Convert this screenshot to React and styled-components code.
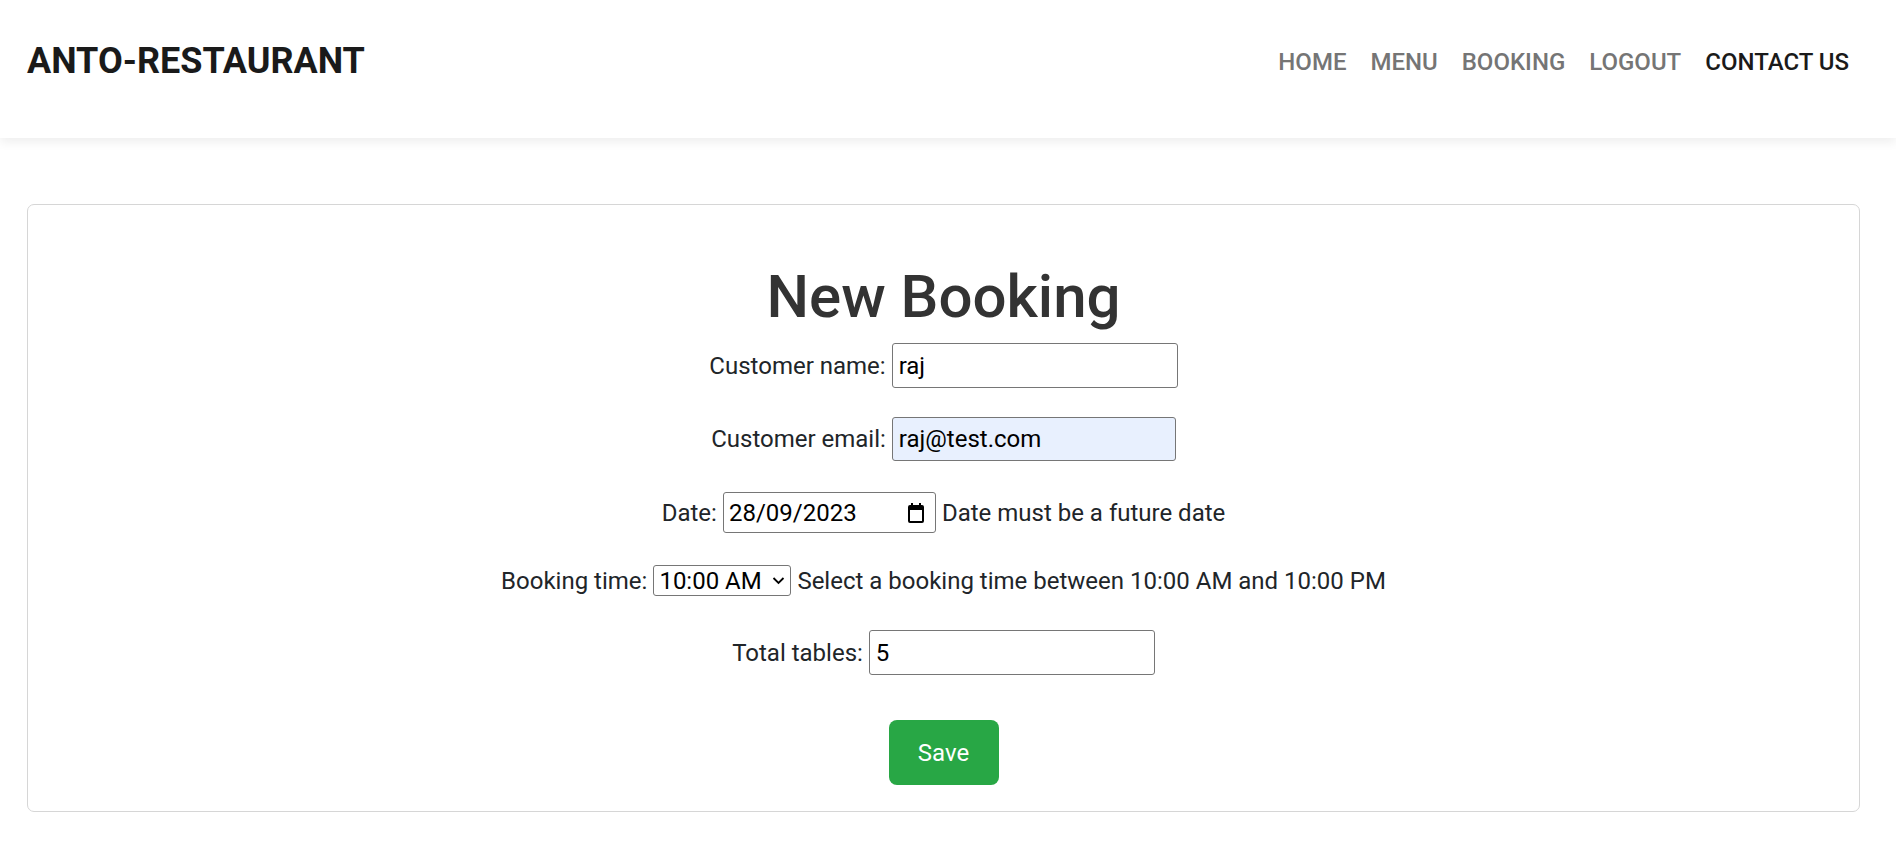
import styled, { createGlobalStyle } from "styled-components";

const GlobalStyle = createGlobalStyle`
  html, body {
    margin: 0;
    padding: 0;
    background: #fff;
  }
  body {
    font-family: Roboto, "Liberation Sans", sans-serif;
    color: #212529;
  }
`;

const Header = styled.header`
  height: 138px;
  box-sizing: border-box;
  padding: 40px 47px 0 27px;
  background: #fff;
  box-shadow: 0 4px 10px rgba(0, 0, 0, 0.07);
`;

const Bar = styled.div`
  height: 44px;
  display: flex;
  align-items: center;
  justify-content: space-between;
`;

const Logo = styled.a`
  font-size: 36px;
  font-weight: 700;
  color: #1a1a1a;
  text-decoration: none;
  line-height: 1.2;
`;

const Nav = styled.ul`
  margin: 0;
  padding: 0;
  list-style: none;
  display: flex;
  gap: 24px;
`;

const NavLink = styled.li`
  font-size: 24px;
  font-weight: 500;
  line-height: 1.2;
  color: ${(props) => (props.active ? "#1a1a1a" : "#757575")};
`;

const Main = styled.main`
  padding: 66px 36px 0 27px;
`;

const Card = styled.section`
  border: 1px solid #d6d6d6;
  border-radius: 7px;
  padding: 56px 0 26px;
  display: flex;
  flex-direction: column;
  align-items: center;
`;

const Title = styled.h1`
  margin: 0 0 10px;
  font-size: 60px;
  font-weight: 500;
  line-height: 1.2;
  color: #333;
`;

const Form = styled.form`
  display: flex;
  flex-direction: column;
  align-items: center;
`;

const Row = styled.div`
  height: 45px;
  margin-top: ${(props) => props.space || 0}px;
  display: flex;
  align-items: center;
  justify-content: center;
  gap: 6px;
  font-size: 24px;
`;

const TextInput = styled.input`
  box-sizing: border-box;
  width: ${(props) => props.w || 286}px;
  height: ${(props) => props.h || 45}px;
  padding: 0 6px;
  border: 1px solid #767676;
  border-radius: 3px;
  font-family: Roboto, "Liberation Sans", sans-serif;
  font-size: 24px;
  color: #000;
  background: ${(props) => (props.filled ? "#e8f0fe" : "#fff")};
  outline: none;
`;

const DateBox = styled.div`
  box-sizing: border-box;
  width: 213px;
  height: 41px;
  padding: 0 11px 0 5px;
  border: 1px solid #767676;
  border-radius: 3px;
  display: flex;
  align-items: center;
  justify-content: space-between;
  color: #000;
`;

const SelectWrap = styled.div`
  position: relative;
  display: flex;
`;

const Select = styled.select`
  box-sizing: border-box;
  width: 138px;
  height: 31px;
  padding: 0 0 0 5px;
  border: 1px solid #767676;
  border-radius: 3px;
  font-family: Roboto, "Liberation Sans", sans-serif;
  font-size: 24px;
  color: #000;
  background: #fff;
  appearance: none;
  -webkit-appearance: none;
`;

const Chevron = styled.svg`
  position: absolute;
  right: 6px;
  top: 11px;
  pointer-events: none;
`;

const SaveButton = styled.button`
  margin-top: 45px;
  width: 110px;
  height: 65px;
  border: none;
  border-radius: 8px;
  background: #28a745;
  color: #fff;
  font-family: Roboto, "Liberation Sans", sans-serif;
  font-size: 24px;
`;

const CalendarIcon = () => (
  <svg width="16" height="20" viewBox="0 0 16 20">
    <rect x="3" y="0" width="2" height="4" fill="#000" />
    <rect x="11" y="0" width="2" height="4" fill="#000" />
    <rect x="1" y="3" width="14" height="16" fill="none" stroke="#000" strokeWidth="2" rx="1" />
    <rect x="1" y="3" width="14" height="4" fill="#000" />
  </svg>
);

const navItems = ["HOME", "MENU", "BOOKING", "LOGOUT"];

const App = () => {
  return (
    <>
      <GlobalStyle />
      <Header>
        <Bar>
          <Logo href="#">ANTO-RESTAURANT</Logo>
          <Nav>
            {navItems.map((item) => (
              <NavLink key={item}>{item}</NavLink>
            ))}
            <NavLink active>CONTACT US</NavLink>
          </Nav>
        </Bar>
      </Header>
      <Main>
        <Card>
          <Title>New Booking</Title>
          <Form onSubmit={(e) => e.preventDefault()}>
            <Row>
              <label>Customer name:</label>
              <TextInput defaultValue="raj" />
            </Row>
            <Row space={28}>
              <label>Customer email:</label>
              <TextInput filled w={284} h={44} defaultValue="raj@test.com" />
            </Row>
            <Row space={29}>
              <label>Date:</label>
              <DateBox>
                <span>28/09/2023</span>
                <CalendarIcon />
              </DateBox>
              <span>Date must be a future date</span>
            </Row>
            <Row space={23}>
              <label>Booking time:</label>
              <SelectWrap>
                <Select defaultValue="10:00">
                  <option value="10:00">10:00 AM</option>
                </Select>
                <Chevron width="13" height="9" viewBox="0 0 13 9">
                  <path d="M1.5 2 L6.5 7 L11.5 2" fill="none" stroke="#000" strokeWidth="1.8" />
                </Chevron>
              </SelectWrap>
              <span>Select a booking time between 10:00 AM and 10:00 PM</span>
            </Row>
            <Row space={27}>
              <label>Total tables:</label>
              <TextInput defaultValue="5" />
            </Row>
            <SaveButton type="submit">Save</SaveButton>
          </Form>
        </Card>
      </Main>
    </>
  );
};

export default App;
